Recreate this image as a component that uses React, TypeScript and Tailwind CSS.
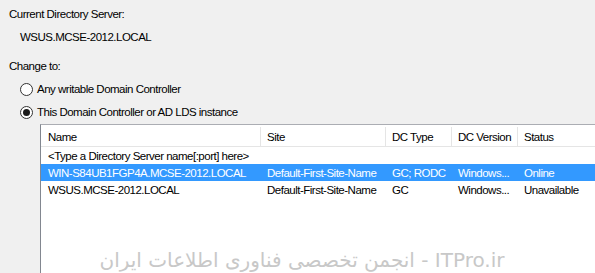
import React from "react";

const cols = [
  { key: "name", label: "Name", w: "w-[220px]" },
  { key: "site", label: "Site", w: "w-[125px]" },
  { key: "type", label: "DC Type", w: "w-[66px]" },
  { key: "ver", label: "DC Version", w: "w-[66px]" },
  { key: "status", label: "Status", w: "w-[120px]" },
];

const rows = [
  { name: "<Type a Directory Server name[:port] here>", site: "", type: "", ver: "", status: "" },
  {
    name: "WIN-S84UB1FGP4A.MCSE-2012.LOCAL",
    site: "Default-First-Site-Name",
    type: "GC; RODC",
    ver: "Windows...",
    status: "Online",
    selected: true,
  },
  {
    name: "WSUS.MCSE-2012.LOCAL",
    site: "Default-First-Site-Name",
    type: "GC",
    ver: "Windows...",
    status: "Unavailable",
  },
];

const Radio = ({ checked, label }: { checked?: boolean; label: string }) => (
  <div className="flex items-center h-4 pl-5">
    <span className="w-[13px] h-[13px] rounded-full border border-[#333] bg-white flex items-center justify-center">
      {checked && <span className="w-[7px] h-[7px] rounded-full bg-[#1a1a1a]" />}
    </span>
    <span className="ml-[4px]">{label}</span>
  </div>
);

export default function App() {
  return (
    <div
      className="relative w-[595px] h-[273px] overflow-hidden bg-[#f0f0f0] text-[11.5px] leading-4 text-black tracking-[-0.5px]"
      style={{ fontFamily: '"Liberation Sans", Arial, sans-serif' }}
    >
      <div className="pt-[6px] pl-[9px]">Current Directory Server:</div>
      <div className="mt-[7px] pl-[20px]">WSUS.MCSE-2012.LOCAL</div>
      <div className="mt-[13px] pl-[9px]">Change to:</div>
      <div className="mt-[7px]">
        <Radio label="Any writable Domain Controller" />
      </div>
      <div className="mt-[7px]">
        <Radio checked label="This Domain Controller or AD LDS instance" />
      </div>

      <div className="ml-[40px] mt-[4px] w-[600px] h-[160px] bg-white border-l border-t border-l-[#828790] border-t-[#abadb3]">
        <div className="flex h-[22px] pt-[2px] border-b border-[#e5e5e5]">
          {cols.map((c) => (
            <div
              key={c.key}
              className={`${c.w} shrink-0 flex items-center pl-[6px] border-r border-[#e5e5e5] first:pl-[7px]`}
            >
              {c.label}
            </div>
          ))}
        </div>
        {rows.map((r, i) => (
          <div
            key={i}
            className={`flex h-[17px] items-center ${r.selected ? "bg-[#3399ff] text-white" : ""}`}
          >
            {r.site === "" ? (
              <div className="pl-[7px] whitespace-nowrap">{r.name}</div>
            ) : (
              cols.map((c) => (
                <div
                  key={c.key}
                  className={`${c.w} shrink-0 pl-[6px] first:pl-[7px] whitespace-nowrap overflow-hidden`}
                >
                  {(r as Record<string, any>)[c.key]}
                </div>
              ))
            )}
          </div>
        ))}
      </div>

      <div
        dir="rtl"
        className="absolute left-[97px] top-[249px] w-[410px] text-center text-[20px] leading-[22px] text-[#c8c8c8] whitespace-nowrap tracking-normal"
        style={{ fontFamily: '"DejaVu Sans", "Noto Sans", sans-serif' }}
      >
        ITPro.ir - انجمن تخصصی فناوری اطلاعات ایران
      </div>
    </div>
  );
}
